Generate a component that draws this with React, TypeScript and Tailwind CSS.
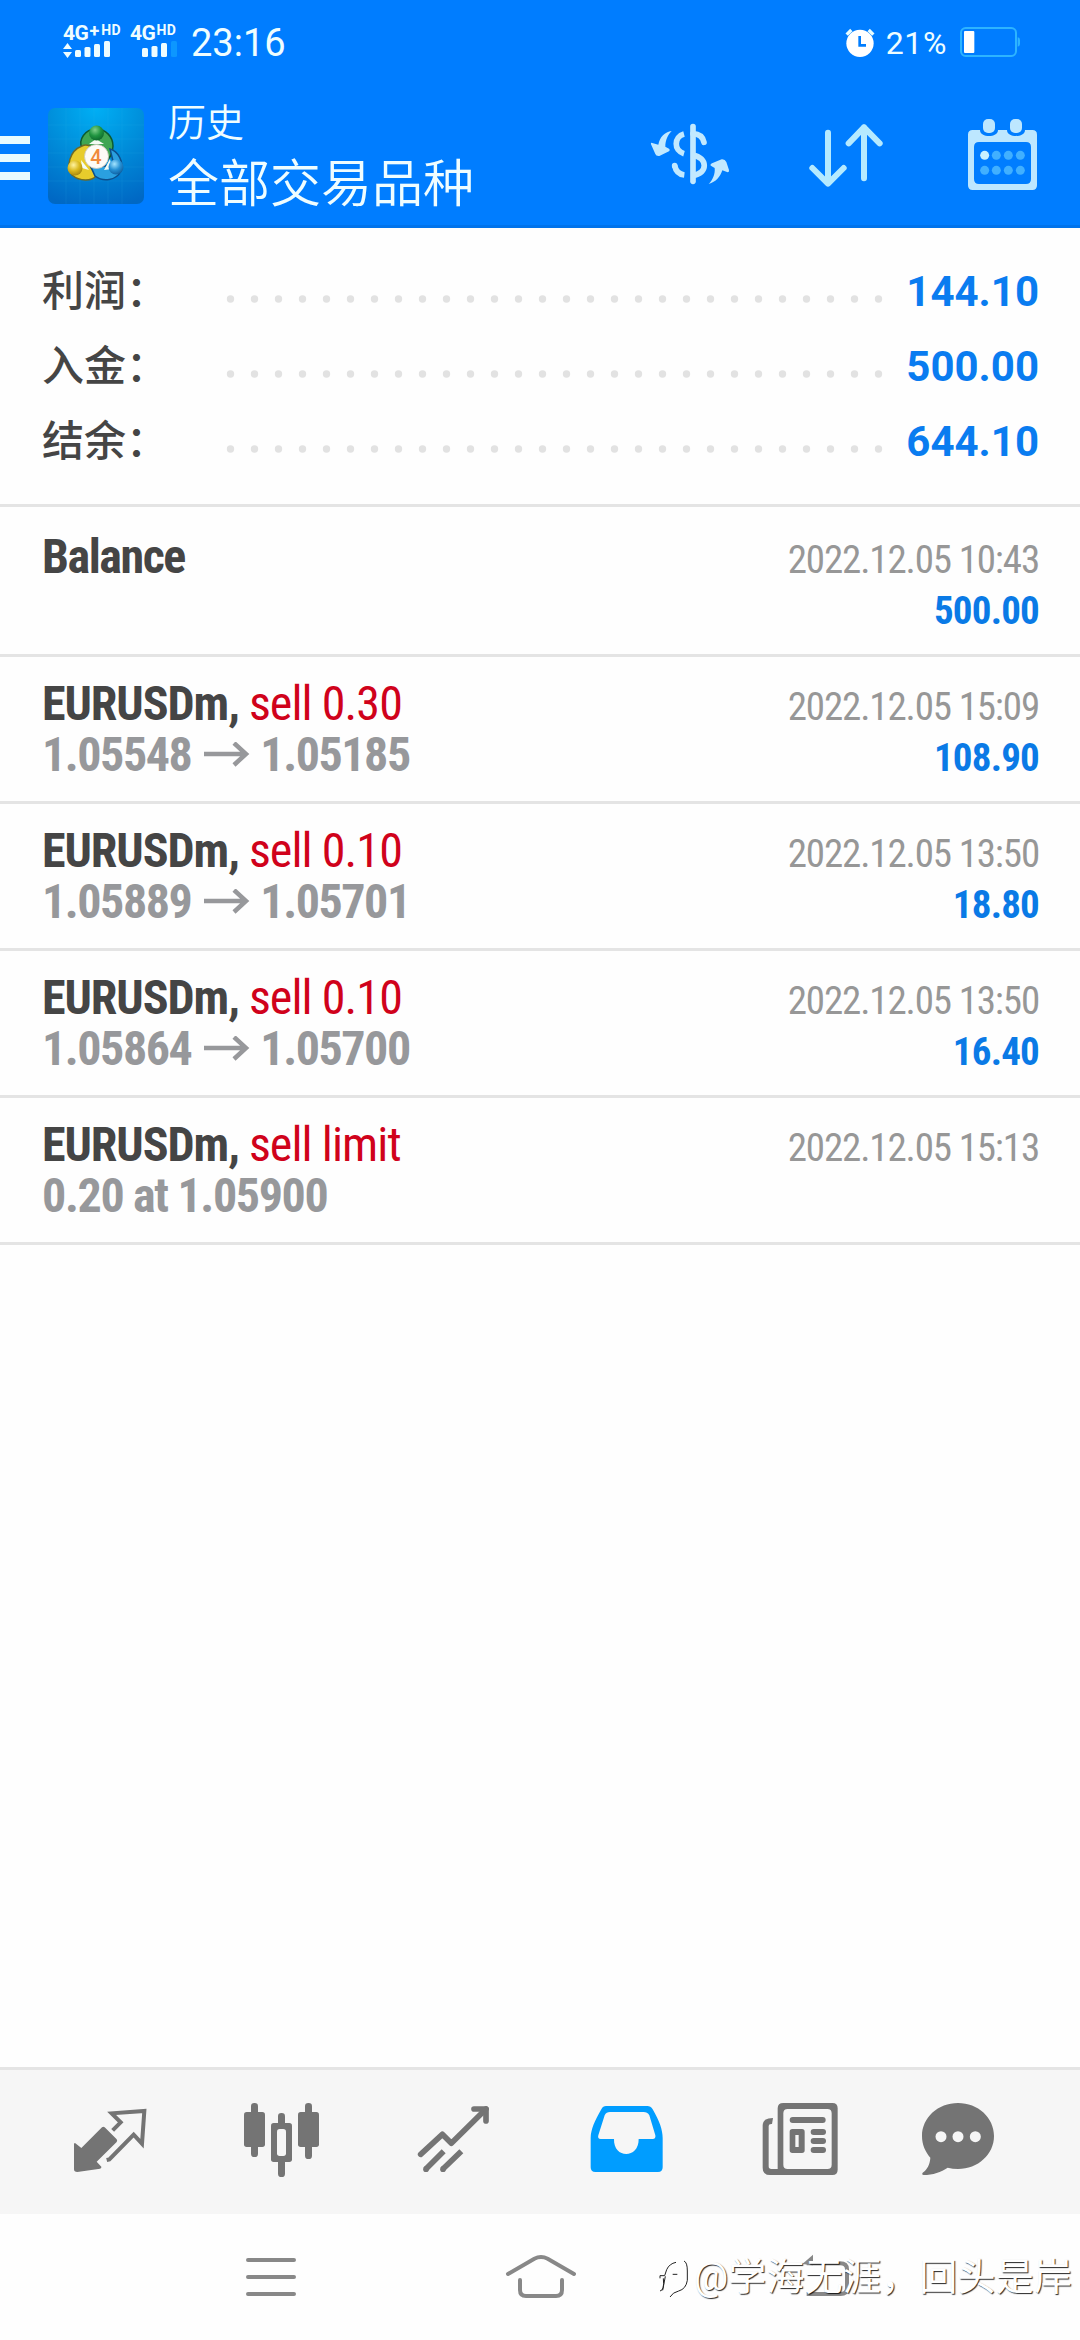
import type { ReactNode } from "react";

interface Deal {
  symbol: string;
  action?: string;
  from?: string;
  to?: string;
  detail?: string;
  time: string;
  amount?: string;
}

const summary = [
  { label: "利润：", value: "144.10" },
  { label: "入金：", value: "500.00" },
  { label: "结余：", value: "644.10" },
];

const deals: Deal[] = [
  { symbol: "Balance", time: "2022.12.05 10:43", amount: "500.00" },
  {
    symbol: "EURUSDm,",
    action: "sell 0.30",
    from: "1.05548",
    to: "1.05185",
    time: "2022.12.05 15:09",
    amount: "108.90",
  },
  {
    symbol: "EURUSDm,",
    action: "sell 0.10",
    from: "1.05889",
    to: "1.05701",
    time: "2022.12.05 13:50",
    amount: "18.80",
  },
  {
    symbol: "EURUSDm,",
    action: "sell 0.10",
    from: "1.05864",
    to: "1.05700",
    time: "2022.12.05 13:50",
    amount: "16.40",
  },
  {
    symbol: "EURUSDm,",
    action: "sell limit",
    detail: "0.20 at 1.05900",
    time: "2022.12.05 15:13",
  },
];

export default function App() {
  return (
    <div className="flex h-[2340px] w-[1080px] flex-col overflow-hidden bg-[#fefefe] font-['Roboto','Noto_Sans_CJK_SC',sans-serif]">
      <header className="flex h-[228px] shrink-0 flex-col border-b-[3px] border-[#0073eb] bg-[#007dff] text-[#effdff]">
        <StatusBar />
        <Toolbar />
      </header>

      <section className="h-[279px] shrink-0 border-b-[3px] border-[#e4e4e4] pl-[42px] pr-[41px] pt-[26px]">
        {summary.map((s) => (
          <div key={s.label} className="flex h-[75px] items-center">
            <span className="w-[184px] text-[42px] font-medium leading-[75px] text-[#454545]">
              {s.label}
            </span>
            <Dots />
            <span className="ml-auto text-[42px] font-bold leading-[75px] text-[#0a7cf0]">
              {s.value}
            </span>
          </div>
        ))}
      </section>

      <main className="flex-1">
        {deals.map((d, i) => (
          <DealRow key={i} deal={d} first={i === 0} />
        ))}
      </main>

      <TabBar />
      <SystemNav />
    </div>
  );
}

function StatusBar() {
  return (
    <div className="flex h-[84px] items-start pl-[63px] pr-[60px] pt-[24px]">
      <div className="w-[67px]">
        <div className="flex h-[17px] items-start whitespace-nowrap font-bold">
          <span className="text-[21px] leading-[19px] tracking-[-0.5px]">4G</span>
          <span className="ml-[1px] text-[18px] leading-[13px]">+</span>
          <span className="ml-[2px] text-[14px] leading-[13px] tracking-[0.5px]">HD</span>
        </div>
        <svg width="58" height="18" viewBox="0 0 58 18" fill="#effdff">
          <path d="M0 8 4.500 2 9 8ZM0 11 4.500 17 9 11Z" />
          <rect x="12" y="9" width="6" height="7" rx="1.500" />
          <rect x="21.500" y="6" width="6" height="10" rx="1.500" />
          <rect x="31" y="3" width="6" height="13" rx="1.500" />
          <rect x="41" y="0" width="6" height="16" rx="1.500" />
        </svg>
      </div>
      <div className="w-[61px]">
        <div className="flex h-[17px] items-start whitespace-nowrap font-bold">
          <span className="text-[21px] leading-[19px] tracking-[-0.5px]">4G</span>
          <span className="ml-[1px] text-[14px] leading-[13px] tracking-[0.5px]">HD</span>
        </div>
        <svg width="50" height="18" viewBox="0 0 50 18" fill="#effdff">
          <rect x="12" y="7" width="6" height="9" rx="1.500" />
          <rect x="21.500" y="5" width="6" height="11" rx="1.500" />
          <rect x="31" y="2" width="6" height="14" rx="1.500" />
          <rect x="41" y="0" width="6" height="16" rx="1.500" fill="#0d97ff" />
        </svg>
      </div>
      <span className="text-[38px] leading-[38px]">23:16</span>

      <svg className="ml-auto" width="32" height="36" viewBox="726 72 96 108">
        <circle cx="774" cy="130" r="41" fill="#fff" />
        <path d="M734 104 748 90M814 104 800 90" stroke="#e6fcff" strokeWidth="10" />
        <path d="M773 108V136H792" fill="none" stroke="#007dff" strokeWidth="8" />
      </svg>
      <span className="ml-[10px] text-[32px] leading-[39px] tracking-[0.6px]">21%</span>
      <svg className="ml-[12px]" width="61" height="36" viewBox="1077 72 183 108">
        <rect x="1083" y="84" width="165" height="84" rx="14" fill="none" stroke="#2db4ff" strokeWidth="6" />
        <rect x="1092" y="93" width="31" height="66" rx="3" fill="#fff" />
        <path d="M1253 112Q1260 113 1260 120V132Q1260 139 1253 140Z" fill="#2db4ff" />
      </svg>
    </div>
  );
}

function Toolbar() {
  return (
    <div className="flex flex-1 items-start">
      <div className="mt-[52px] flex w-[30px] flex-col gap-[10px]">
        <div className="h-2 bg-[#e8fbff]" />
        <div className="h-2 bg-[#e8fbff]" />
        <div className="h-2 bg-[#e8fbff]" />
      </div>
      <AppLogo />
      <div className="ml-[24px] mt-[14px] font-[350]">
        <div className="text-[38px] leading-[50px]">历史</div>
        <div className="mt-[5px] text-[51px] leading-[64px]">全部交易品种</div>
      </div>
      <div className="ml-auto mt-[34px] flex pr-[41px]">
        {/* currency */}
        <svg className="mr-[72px]" width="84" height="72" viewBox="144 354 252 216">
          <g fill="none" stroke="#c2e9ff" strokeWidth="17">
            <path d="M279 380V544" strokeLinecap="round" />
            <path d="M252 402C222 410 220 452 252 461" />
            <path d="M279 401C299 402 309 412 312 427" strokeLinecap="round" />
            <path d="M224 497C227 512 236 523 253 525" strokeLinecap="butt" />
            <path d="M279 466C324 472 324 522 279 526" />
          </g>
          <circle cx="224" cy="497" r="8.500" fill="#c2e9ff" />
          <path
            d="M215 393C194 396 180 410 175 434L154 428Q152 428 153 433L166 462Q168 469 178 468L207 454Q212 450 207 446L196 440C196 420 204 404 215 393Z"
            fill="#c2e9ff"
          />
          <path
            d="M326 552C348 546 361 530 367 511L383 517Q388 517 387 510L379 486Q375 477 365 478L336 490Q328 495 334 498L344 504C346 522 338 540 326 552Z"
            fill="#c2e9ff"
          />
        </svg>
        {/* sort */}
        <svg className="mr-[79px]" width="84" height="72" viewBox="612 354 252 216">
          <path
            d="M684 398V550M637 504 684 551 731 504M792 535V382M746 430 792 382 839 430"
            fill="none"
            stroke="#b5eaff"
            strokeWidth="18"
            strokeLinecap="round"
            strokeLinejoin="round"
          />
        </svg>
        {/* calendar */}
        <svg width="72" height="76" viewBox="1101 354 216 228">
          <path
            fillRule="evenodd"
            fill="#bde7ff"
            d="M1118 390H1140C1140 414 1194 414 1194 390H1221C1221 414 1275 414 1275 390H1297Q1311 390 1311 404V556Q1311 570 1297 570H1118Q1104 570 1104 556V404Q1104 390 1118 390ZM1137 426Q1122 426 1122 441V537Q1122 552 1137 552H1278Q1293 552 1293 537V441Q1293 426 1278 426Z"
          />
          <rect x="1149" y="357" width="36" height="42" rx="15" fill="#bde7ff" />
          <rect x="1230" y="357" width="36" height="42" rx="15" fill="#bde7ff" />
          <circle cx="1154" cy="466" r="13.500" fill="#c8f1ff" />
          <g fill="#41b0ff">
            <circle cx="1189" cy="466" r="13.500" />
            <circle cx="1225" cy="466" r="13.500" />
            <circle cx="1261" cy="466" r="13.500" />
            <circle cx="1154" cy="511" r="13.500" />
            <circle cx="1189" cy="511" r="13.500" />
            <circle cx="1225" cy="511" r="13.500" />
            <circle cx="1261" cy="511" r="13.500" />
          </g>
        </svg>
      </div>
    </div>
  );
}

function AppLogo() {
  return (
    <svg className="ml-[18px] mt-[24px]" width="96" height="96" viewBox="0 0 96 96">
      <defs>
        <radialGradient id="tile" cx="0.5" cy="0" r="1.05">
          <stop offset="0" stopColor="#00aff5" />
          <stop offset="0.45" stopColor="#0090dc" />
          <stop offset="1" stopColor="#0068c4" />
        </radialGradient>
        <radialGradient id="green" cx="0.4" cy="0.3" r="0.8">
          <stop offset="0" stopColor="#7fd08a" />
          <stop offset="0.5" stopColor="#1f9440" />
          <stop offset="1" stopColor="#0a5f2a" />
        </radialGradient>
        <radialGradient id="yellow" cx="0.4" cy="0.3" r="0.8">
          <stop offset="0" stopColor="#fff3a0" />
          <stop offset="0.5" stopColor="#d9b81c" />
          <stop offset="1" stopColor="#9a7a10" />
        </radialGradient>
        <radialGradient id="blue" cx="0.4" cy="0.3" r="0.8">
          <stop offset="0" stopColor="#a4e4ff" />
          <stop offset="0.5" stopColor="#2590d4" />
          <stop offset="1" stopColor="#0a5596" />
        </radialGradient>
      </defs>
      <rect width="96" height="96" rx="7" fill="url(#tile)" />
      <path
        d="M18 0V96M32 0V96M46 0V96M60 0V96M74 0V96M0 17H96M0 31H96M0 45H96M0 59H96M0 73H96"
        stroke="#3ab4f0"
        strokeOpacity="0.12"
      />
      <g strokeWidth="1.500">
        <path
          d="M48 21C58 21 65 29 65 38C65 46 61 52 56 54L48 38L34 40C30 32 37 21 48 21Z"
          fill="#3fa653"
          stroke="#0d5b30"
        />
        <path
          d="M34 38C39 35 45 39 45 42L42 58L48 68C44 73 32 74 24 67C18 59 21 43 34 38Z"
          fill="#e8cc2c"
          stroke="#6f6a26"
        />
        <path
          d="M62 41C70 43 76 54 73 63C68 73 55 74 47 68L43 59L57 58L66 57Z"
          fill="#2aa0e0"
          stroke="#0c4f8c"
        />
      </g>
      <path d="M41 36 48 31 56 36ZM33 52 34 60 41 62ZM62 51 64 61 56 62Z" fill="#f4fbf4" />
      <circle cx="48.500" cy="25" r="7.500" fill="url(#green)" />
      <circle cx="27" cy="60" r="7.500" fill="url(#yellow)" />
      <circle cx="68" cy="59" r="7.500" fill="url(#blue)" />
      <circle cx="48.500" cy="48.500" r="12" fill="#fdfbf7" stroke="#c9c4b8" strokeWidth="0.800" />
      <text x="48" y="55.500" textAnchor="middle" fontSize="20" fontWeight="500" fill="#f08a3c">
        4
      </text>
    </svg>
  );
}

function Dots() {
  return (
    <svg className="mt-[15px]" width="660" height="8" viewBox="226 0 660 8" fill="#e2e2e2">
      {Array.from({ length: 28 }, (_, i) => (
        <circle key={i} cx={230.5 + i * 24} cy="4" r="3.700" />
      ))}
    </svg>
  );
}

function DealRow({ deal, first }: { deal: Deal; first: boolean }) {
  return (
    <div className={first ? "border-b-[3px] border-[#e4e4e4] pt-[3px]" : "border-b-[3px] border-[#e4e4e4]"}>
      <div className="flex h-[144px] justify-between pl-[42px] pr-[41px] pt-[21px] [font-stretch:75%]">
        <div className="text-[48px] font-bold leading-[51px] tracking-[-1.45px]">
          <div className="flex h-[51px] gap-[10px] text-[#454545]">
            {deal.action ? (
              <>
                <span className="tracking-[-1.05px]">{deal.symbol}</span>
                <span className="font-normal tracking-[-0.9px] text-[#d0021b]">{deal.action}</span>
              </>
            ) : (
              <span>{deal.symbol}</span>
            )}
          </div>
          {deal.from && (
            <div className="flex items-center text-[#97989b]">
              <span>{deal.from}</span>
              <svg className="ml-[12px] mr-[9px]" width="48" height="26" viewBox="0 0 48 26">
                <path d="M1 12H44M31 1 43 12 31 23" fill="none" stroke="#97989b" strokeWidth="4.500" />
              </svg>
              <span>{deal.to}</span>
            </div>
          )}
          {deal.detail && <div className="tracking-[-1.35px] text-[#97989b]">{deal.detail}</div>}
        </div>
        <div className="pt-[4px] text-right text-[39px] leading-[51px]">
          <div className="tracking-[-1.15px] text-[#979797]">{deal.time}</div>
          {deal.amount && (
            <div className="font-bold tracking-[-0.8px] text-[#0a7ae6]">{deal.amount}</div>
          )}
        </div>
      </div>
    </div>
  );
}

function Tab({ viewBox, children }: { viewBox: string; children: ReactNode }) {
  return (
    <svg width="80" height="80" viewBox={viewBox} fill="#747474">
      {children}
    </svg>
  );
}

function TabBar() {
  return (
    <nav className="grid h-[147px] shrink-0 grid-cols-[172px_172px_173px_174px_157px_80px] border-t-[3px] border-[#e4e4e4] bg-[#f6f6f6] pl-[70px] pt-[30px]">
      {/* quotes */}
      <Tab viewBox="90 150 240 240">
        <path d="M186 232Q190 229 194 232L230 268Q233 272 230 276L170 335L184 350Q185 355 180 356L112 366Q102 366 102 358V283Q103 276 108 281L124 294Z" />
        <path
          d="M218 241 242 217 215 190 313 183 306 281 281 254 208 328 200 330"
          fill="none"
          stroke="#747474"
          strokeWidth="12"
        />
      </Tab>
      {/* chart */}
      <Tab viewBox="606 150 240 240">
        <rect x="633" y="159" width="21" height="162" rx="10" />
        <rect x="612" y="186" width="63" height="105" rx="8" />
        <rect x="795" y="159" width="21" height="168" rx="10" />
        <rect x="774" y="186" width="63" height="105" rx="8" />
        <rect x="714" y="189" width="21" height="192" rx="10" />
        <rect x="693" y="219" width="63" height="117" rx="8" />
        <rect x="711" y="237" width="27" height="81" rx="8" fill="#f6f6f6" />
      </Tab>
      {/* trade */}
      <Tab viewBox="1122 150 240 240">
        <g fill="none" stroke="#747474" strokeWidth="17" strokeLinejoin="round">
          <path d="M1142 313 1207 253 1234 280 1338 177" strokeLinecap="round" />
          <path d="M1302 177H1338V213" strokeLinecap="round" />
          <path d="M1157 358 1211 304M1208 358 1264 304" />
        </g>
        <circle cx="1158" cy="357.500" r="8.500" />
        <circle cx="1209" cy="357.500" r="8.500" />
      </Tab>
      {/* history */}
      <Tab viewBox="81 150 240 240">
        <path
          fillRule="evenodd"
          fill="#009dff"
          d="M138 168H262Q272 168 278 178C298 212 308 240 308 264V352Q308 366 294 366H106Q92 366 92 352V264C92 240 104 212 124 178Q129 168 138 168ZM150 186Q139 186 134 196L115 256Q112 267 122 267H162C160 327 237 327 236 267H278Q288 267 286 256L268 196Q262 186 251 186Z"
        />
      </Tab>
      {/* news */}
      <Tab viewBox="603 150 240 240">
        <path
          fillRule="evenodd"
          d="M670 159H817Q833 159 833 175V359Q833 375 817 375H630Q608 375 608 353V226Q608 204 639 204L636 222Q626 221 626 228V349Q626 357 634 357H653V175Q653 159 670 159ZM683 177Q670 177 670 190V344Q670 357 683 357H802Q815 357 815 344V190Q815 177 802 177Z"
        />
        <rect x="689" y="201" width="108" height="18" rx="9" />
        <path
          fillRule="evenodd"
          d="M697 237H726Q734 237 734 245V301Q734 309 726 309H697Q689 309 689 301V245Q689 237 697 237ZM706 255V291H716V255Z"
        />
        <rect x="752" y="237" width="46" height="18" rx="9" />
        <rect x="752" y="264" width="46" height="18" rx="9" />
        <rect x="752" y="291" width="46" height="18" rx="9" />
      </Tab>
      {/* messages */}
      <Tab viewBox="1074 150 240 240">
        <path d="M1194 159C1254 159 1302 203 1302 258C1302 313 1254 357 1194 357Q1178 357 1163 353C1144 366 1118 375 1091 375Q1084 374 1088 368C1102 358 1110 342 1111 323C1096 306 1086 284 1086 258C1086 203 1134 159 1194 159Z" />
        <g fill="#f6f6f6">
          <circle cx="1143" cy="260" r="16.500" />
          <circle cx="1194" cy="260" r="16.500" />
          <circle cx="1246" cy="260" r="16.500" />
        </g>
      </Tab>
    </nav>
  );
}

function SystemNav() {
  return (
    <div className="relative flex h-[126px] shrink-0 items-start bg-[#fefefe] pl-[245px] pt-[39px]">
      <svg width="52" height="45" viewBox="135 99 156 135">
        <path d="M144 120H282M144 171H282M144 222H282" stroke="#888" strokeWidth="12" strokeLinecap="round" />
      </svg>
      <svg className="ml-[208px]" width="72" height="48" viewBox="915 99 216 144">
        <path
          d="M924 162 1003 116Q1023 106 1043 116L1122 162M960 180V210Q960 228 978 228H1068Q1086 228 1086 210V180"
          fill="none"
          stroke="#888"
          strokeWidth="12"
          strokeLinecap="round"
        />
      </svg>
      <svg className="ml-[218px]" width="60" height="48" viewBox="465 99 180 144">
        <path d="M519 104V136L487 132Z" fill="#888" />
        <path d="M500 130H600Q621 130 621 148V204Q621 222 602 222H500" fill="none" stroke="#888" strokeWidth="12" />
      </svg>

      {/* watermark */}
      <div className="absolute left-[654px] top-[36px] flex items-center">
        <svg width="38" height="54" viewBox="42 105 114 162" fill="none">
          <path
            d="M60 190V182H74L80 164Q88 146 108 142M60 228Q74 226 70 190M76 184 68 226M98 178H112M132 138Q142 142 142 168V196Q138 222 116 228 98 232 90 246"
            stroke="#222"
            strokeWidth="3"
          />
        </svg>
        <span className="ml-[2px] whitespace-nowrap text-[38px] leading-[54px] tracking-[0.2px] text-white [text-shadow:1px_1px_1px_rgba(0,0,0,0.85)]">
          @学海无涯，回头是岸
        </span>
      </div>
    </div>
  );
}
